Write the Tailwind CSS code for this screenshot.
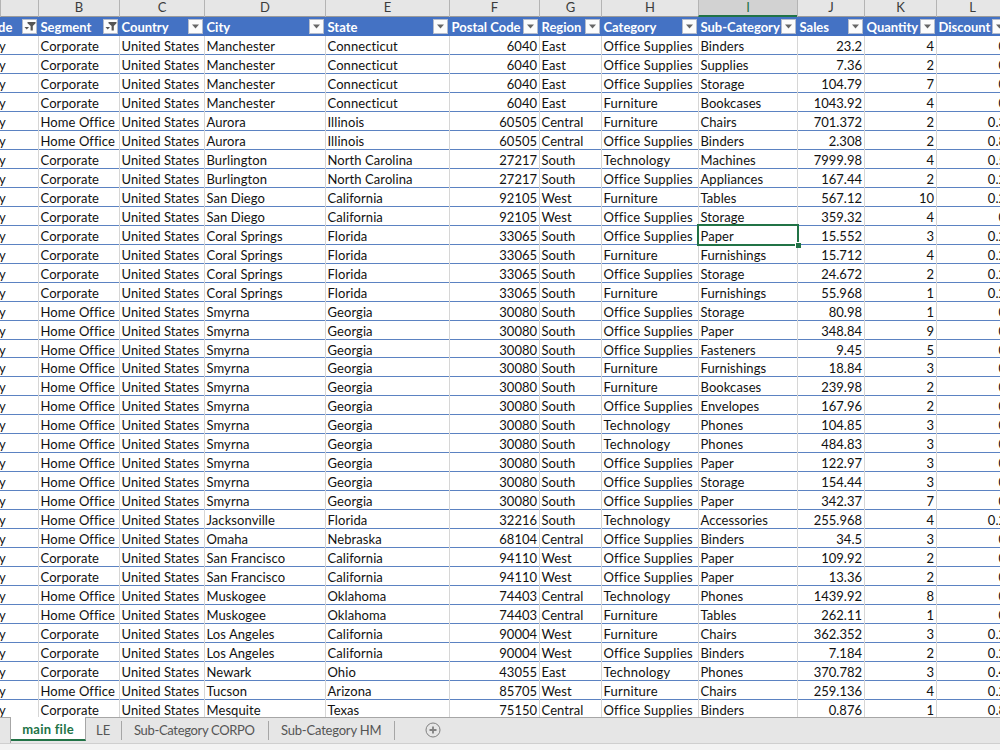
<!DOCTYPE html>
<html lang="en">
    <head>
        <meta charset="UTF-8" />
        <meta name="viewport" content="width=device-width, initial-scale=1.0" />
        <title>main file</title>
        <script src="https://cdn.jsdelivr.net/npm/@tailwindcss/browser@4"></script>
    </head>
    <body class="w-[1000px] h-[750px] overflow-hidden bg-white font-['Lato',sans-serif] text-[#111111]">
        <div class="flex flex-col w-[1000px] h-[750px] overflow-hidden">
            <div class="h-[717px] overflow-hidden">
                <div
                    id="letters"
                    class="grid grid-cols-[38px_81px_85px_121px_124px_90px_62px_97px_99px_67px_72px_72px] w-[1008px] h-[17px] bg-[#e6e6e6] border-b border-[#9b9b9b] text-[13px] leading-[15px] text-center text-[#3b3b3b]"
                ></div>
                <div
                    id="heads"
                    class="grid grid-cols-[38px_81px_85px_121px_124px_90px_62px_97px_99px_67px_72px_72px] w-[1008px] h-[19px] bg-[#4472c4] text-[13px] font-bold text-white"
                ></div>
                <div id="rows" class="w-[1008px] text-[13px]"></div>
            </div>

            <div class="flex h-[27px] shrink-0 bg-[#e6e6e6] border-t border-[#a6a6a6] border-b border-b-[#cfcfcf] text-[13px] text-[#555555]">
                <div class="w-[11px] border-r border-[#a6a6a6]"></div>
                <div class="w-[75px] h-[24px] -mt-px bg-white border-b-2 border-[#217346] border-r border-r-[#a6a6a6] text-center leading-[25px] font-bold tracking-[0.25px] text-[#217346]">main file</div>
                <div class="w-[35px] pl-[10px] leading-[24px]">LE</div>
                <div class="w-[147px] h-[19px] mt-[3px] border-l border-[#a6a6a6] pl-[12px] leading-[18px] tracking-[-0.33px] whitespace-nowrap">Sub-Category CORPO</div>
                <div class="w-[126px] h-[19px] mt-[3px] border-l border-[#a6a6a6] pl-[12px] leading-[18px] tracking-[-0.2px] whitespace-nowrap">Sub-Category HM</div>
                <div class="w-[31px] h-[19px] mt-[3px] border-l border-[#a6a6a6]"></div>
                <svg class="w-4 h-4 mt-[4px]" viewBox="0 0 16 16" fill="none" stroke="#808080">
                    <circle cx="8" cy="8" r="7" />
                    <path d="M8 4.500v7M4.500 8h7" stroke-width="1.8" />
                </svg>
            </div>
            <div class="grow bg-[#f3f3f3]"></div>
        </div>

        <template id="arrow">
            <svg class="absolute right-px top-[2px] w-[15px] h-[15px]" viewBox="0 0 15 15">
                <rect x=".5" y=".5" width="14" height="14" fill="#fcfcfc" stroke="#b5bccb" />
                <path d="M4 5.500h7L7.500 9.500z" fill="#666" />
            </svg>
        </template>
        <template id="funnel">
            <svg class="absolute right-px top-[2px] w-[15px] h-[15px]" viewBox="0 0 15 15">
                <rect x=".5" y=".5" width="14" height="14" fill="#fcfcfc" stroke="#b5bccb" />
                <path d="M5.500 3h8v1.200L10.800 7v4.500H8.600V7L5.500 4.200z" fill="#555" />
                <path d="M2.500 8h4.500L4.750 10.500z" fill="#555" />
            </svg>
        </template>

        <script>
            const heads = ['de', 'Segment', 'Country', 'City', 'State', 'Postal Code', 'Region', 'Category', 'Sub-Category', 'Sales', 'Quantity', 'Discount'];
            const data = `Corporate|Manchester|Connecticut|6040|East|Office Supplies|Binders|23.2|4|0
Corporate|Manchester|Connecticut|6040|East|Office Supplies|Supplies|7.36|2|0
Corporate|Manchester|Connecticut|6040|East|Office Supplies|Storage|104.79|7|0
Corporate|Manchester|Connecticut|6040|East|Furniture|Bookcases|1043.92|4|0
Home Office|Aurora|Illinois|60505|Central|Furniture|Chairs|701.372|2|0.3
Home Office|Aurora|Illinois|60505|Central|Office Supplies|Binders|2.308|2|0.8
Corporate|Burlington|North Carolina|27217|South|Technology|Machines|7999.98|4|0.5
Corporate|Burlington|North Carolina|27217|South|Office Supplies|Appliances|167.44|2|0.2
Corporate|San Diego|California|92105|West|Furniture|Tables|567.12|10|0.2
Corporate|San Diego|California|92105|West|Office Supplies|Storage|359.32|4|0
Corporate|Coral Springs|Florida|33065|South|Office Supplies|Paper|15.552|3|0.2
Corporate|Coral Springs|Florida|33065|South|Furniture|Furnishings|15.712|4|0.2
Corporate|Coral Springs|Florida|33065|South|Office Supplies|Storage|24.672|2|0.2
Corporate|Coral Springs|Florida|33065|South|Furniture|Furnishings|55.968|1|0.2
Home Office|Smyrna|Georgia|30080|South|Office Supplies|Storage|80.98|1|0
Home Office|Smyrna|Georgia|30080|South|Office Supplies|Paper|348.84|9|0
Home Office|Smyrna|Georgia|30080|South|Office Supplies|Fasteners|9.45|5|0
Home Office|Smyrna|Georgia|30080|South|Furniture|Furnishings|18.84|3|0
Home Office|Smyrna|Georgia|30080|South|Furniture|Bookcases|239.98|2|0
Home Office|Smyrna|Georgia|30080|South|Office Supplies|Envelopes|167.96|2|0
Home Office|Smyrna|Georgia|30080|South|Technology|Phones|104.85|3|0
Home Office|Smyrna|Georgia|30080|South|Technology|Phones|484.83|3|0
Home Office|Smyrna|Georgia|30080|South|Office Supplies|Paper|122.97|3|0
Home Office|Smyrna|Georgia|30080|South|Office Supplies|Storage|154.44|3|0
Home Office|Smyrna|Georgia|30080|South|Office Supplies|Paper|342.37|7|0
Home Office|Jacksonville|Florida|32216|South|Technology|Accessories|255.968|4|0.2
Home Office|Omaha|Nebraska|68104|Central|Office Supplies|Binders|34.5|3|0
Corporate|San Francisco|California|94110|West|Office Supplies|Paper|109.92|2|0
Corporate|San Francisco|California|94110|West|Office Supplies|Paper|13.36|2|0
Home Office|Muskogee|Oklahoma|74403|Central|Technology|Phones|1439.92|8|0
Home Office|Muskogee|Oklahoma|74403|Central|Furniture|Tables|262.11|1|0
Corporate|Los Angeles|California|90004|West|Furniture|Chairs|362.352|3|0.2
Corporate|Los Angeles|California|90004|West|Office Supplies|Binders|7.184|2|0.2
Corporate|Newark|Ohio|43055|East|Technology|Phones|370.782|3|0.4
Home Office|Tucson|Arizona|85705|West|Furniture|Chairs|259.136|4|0.2
Corporate|Mesquite|Texas|75150|Central|Office Supplies|Binders|0.876|1|0.8`;

            document.getElementById('letters').innerHTML = [...' BCDEFGHIJKL']
                .map((l) =>
                    l === 'I'
                        ? '<div class="border-l border-[#b4b4b4] bg-[#d2d2d2] border-b-2 border-b-[#217346] text-[#217346]">I</div>'
                        : `<div class="border-l border-[#b4b4b4]">${l}</div>`
                )
                .join('');

            document.getElementById('heads').innerHTML = heads
                .map((h, i) => {
                    const icon = document.getElementById(i < 2 ? 'funnel' : 'arrow').innerHTML;
                    const pad = i ? 'pl-[2.5px]' : '-indent-[2px]';
                    return `<div class="relative leading-[20px] whitespace-nowrap ${pad}">${h}${icon}</div>`;
                })
                .join('');

            document.getElementById('rows').innerHTML = data
                .split('\n')
                .map((line) => {
                    const v = line.split('|');
                    v.splice(1, 0, 'United States');
                    v.unshift('y');
                    const cells = v
                        .map((t, i) => {
                            const numeric = i === 5 || i > 8;
                            const align = numeric ? 'text-right pr-[2px]' : i ? 'pl-[1.5px]' : '-indent-[1px]';
                            const track = numeric ? 'tracking-normal' : i === 7 ? 'tracking-[0.2px]' : 'tracking-[0.08px]';
                            const line = i ? 'border-l border-[#d6d6d6]' : '';
                            const picked = t === 'Paper' && v[9] === '15.552';
                            const box = picked
                                ? '<div class="absolute z-10 -left-[2px] -top-[2px] w-[102px] h-[22px] border-2 border-[#217346]"><div class="absolute -right-[4px] -bottom-[4px] w-[6px] h-[6px] bg-[#217346] border-l border-t border-white"></div></div>'
                                : '';
                            return `<div class="relative ${line} ${align} ${track}">${t}${box}</div>`;
                        })
                        .join('');
                    return `<div class="grid grid-cols-[38px_81px_85px_121px_124px_90px_62px_97px_99px_67px_72px_72px] h-[18.97px] border-b border-[#5b82c2] leading-[20px] whitespace-nowrap">${cells}</div>`;
                })
                .join('');
        </script>
    </body>
</html>
